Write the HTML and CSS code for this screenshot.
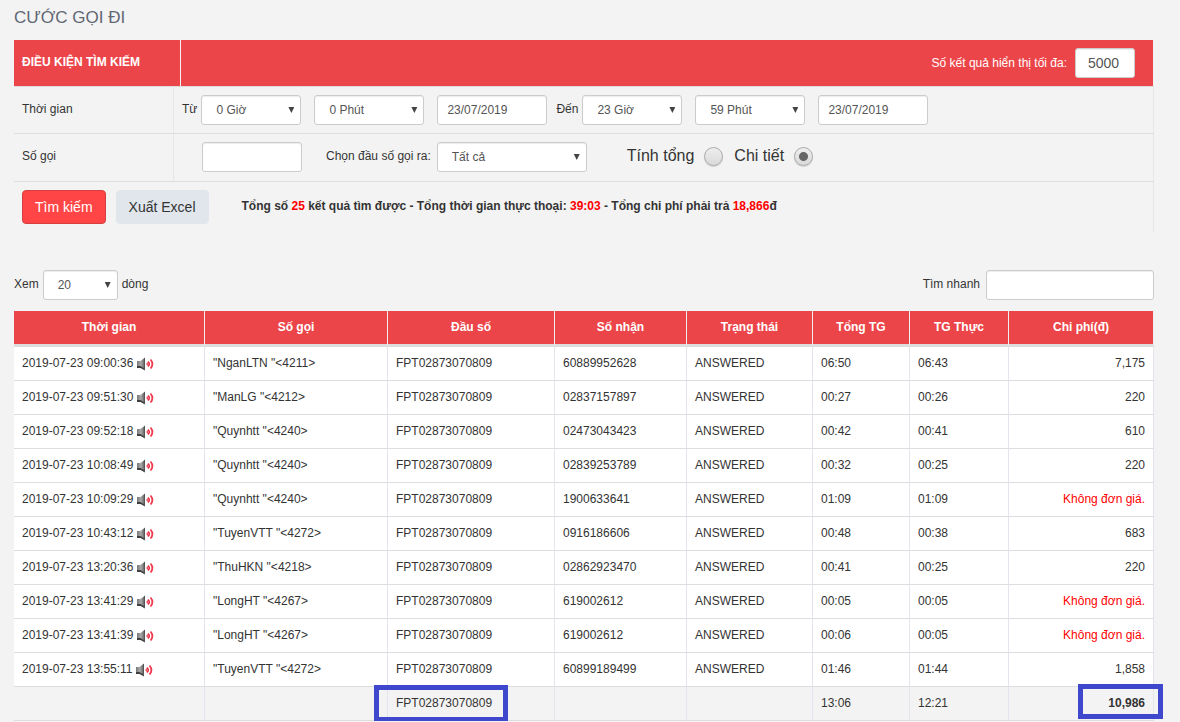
FILE: index.html
```html
<!DOCTYPE html>
<html lang="vi">
<head>
<meta charset="utf-8">
<meta name="viewport" content="width=device-width, initial-scale=1">
<title>Cước gọi đi</title>
<link rel="stylesheet" href="styles.css">
</head>
<body>
<svg class="sprite" aria-hidden="true">
  <defs>
    <linearGradient id="metal" x1="0" y1="0" x2="1" y2="0">
      <stop offset="0" stop-color="#777"/><stop offset="0.5" stop-color="#aaa"/><stop offset="1" stop-color="#555"/>
    </linearGradient>
    <symbol id="sound" viewBox="0 0 17 14">
      <path d="M0 4h3.500L8 0.500v12.500L3.500 10H0z" fill="url(#metal)"/>
      <path d="M0 9h3.500L8 12v1.500L3.500 11H0z" fill="#3f3f3f"/>
      <path d="M7.500 1v12" stroke="#555"/>
      <path d="M9 7l2-2v4z" fill="#f0505f"/>
      <path d="M11 4.500q2.600 2.500 0 5" fill="none" stroke="#e8283c" stroke-width="1.600"/>
      <path d="M13.500 2.500q3.800 4.500 0 9" fill="none" stroke="#ee3c4e" stroke-width="1.800"/>
    </symbol>
  </defs>
</svg>
<main class="page">
  <h1 class="title">CƯỚC GỌI ĐI</h1>
  <form class="filter">
    <div class="filter-head">
      <h2 class="filter-name">ĐIỀU KIỆN TÌM KIẾM</h2>
      <div class="filter-max">
        <label for="max">Số kết quả hiển thị tối đa:</label>
        <input class="field field-max" id="max" type="text" value="5000">
      </div>
    </div>
    <div class="filter-row">
      <div class="filter-label">Thời gian</div>
      <div class="filter-body">
        <label class="lead" for="h1">Từ</label>
        <span class="pick w-s"><select class="field" id="h1"><option>0 Giờ</option></select></span>
        <span class="pick w-m"><select class="field" aria-label="Phút bắt đầu"><option>0 Phút</option></select></span>
        <input class="field w-m" type="text" value="23/07/2019" aria-label="Ngày bắt đầu">
        <label class="lead lead-to" for="h2">Đến</label>
        <span class="pick w-s"><select class="field" id="h2"><option>23 Giờ</option></select></span>
        <span class="pick w-m"><select class="field" aria-label="Phút kết thúc"><option>59 Phút</option></select></span>
        <input class="field w-m" type="text" value="23/07/2019" aria-label="Ngày kết thúc">
      </div>
    </div>
    <div class="filter-row">
      <label class="filter-label" for="caller">Số gọi</label>
      <div class="filter-body filter-body-call">
        <input class="field w-s" id="caller" type="text">
        <label class="prefix-label" for="prefix">Chọn đầu số gọi ra:</label>
        <span class="pick w-l"><select class="field" id="prefix"><option>Tất cả</option></select></span>
        <div class="modes">
          <label class="mode">Tính tổng <input class="radio" type="radio" name="mode"></label>
          <label class="mode">Chi tiết <input class="radio" type="radio" name="mode" checked></label>
        </div>
      </div>
    </div>
    <div class="filter-foot">
      <button class="btn btn-main" type="button">Tìm kiếm</button>
      <button class="btn btn-plain" type="button">Xuất Excel</button>
      <p class="summary">Tổng số <span class="red">25</span> kết quả tìm được - Tổng thời gian thực thoại: <span class="red">39:03</span> - Tổng chi phí phải trả <span class="red">18,866</span>đ</p>
    </div>
  </form>

  <div class="tools">
    <div class="tool"><label for="rows">Xem</label> <span class="pick w-xs"><select class="field" id="rows"><option>20</option></select></span> <span class="tool-text">dòng</span></div>
    <div class="tool tool-find"><label for="find">Tìm nhanh</label> <input class="field w-find" id="find" type="text"></div>
  </div>

  <table class="calls">
    <colgroup><col class="c1"><col class="c2"><col class="c3"><col class="c4"><col class="c5"><col class="c6"><col class="c7"><col class="c8"></colgroup>
    <thead>
      <tr><th>Thời gian</th><th>Số gọi</th><th>Đầu số</th><th>Số nhận</th><th>Trạng thái</th><th>Tổng TG</th><th>TG Thực</th><th>Chi phí(đ)</th></tr>
    </thead>
    <tbody>
      <tr><td>2019-07-23 09:00:36 <svg class="sound"><use href="#sound"/></svg></td><td>"NganLTN "&lt;4211&gt;</td><td>FPT02873070809</td><td>60889952628</td><td>ANSWERED</td><td>06:50</td><td>06:43</td><td class="cost">7,175</td></tr>
      <tr><td>2019-07-23 09:51:30 <svg class="sound"><use href="#sound"/></svg></td><td>"ManLG "&lt;4212&gt;</td><td>FPT02873070809</td><td>02837157897</td><td>ANSWERED</td><td>00:27</td><td>00:26</td><td class="cost">220</td></tr>
      <tr><td>2019-07-23 09:52:18 <svg class="sound"><use href="#sound"/></svg></td><td>"Quynhtt "&lt;4240&gt;</td><td>FPT02873070809</td><td>02473043423</td><td>ANSWERED</td><td>00:42</td><td>00:41</td><td class="cost">610</td></tr>
      <tr><td>2019-07-23 10:08:49 <svg class="sound"><use href="#sound"/></svg></td><td>"Quynhtt "&lt;4240&gt;</td><td>FPT02873070809</td><td>02839253789</td><td>ANSWERED</td><td>00:32</td><td>00:25</td><td class="cost">220</td></tr>
      <tr><td>2019-07-23 10:09:29 <svg class="sound"><use href="#sound"/></svg></td><td>"Quynhtt "&lt;4240&gt;</td><td>FPT02873070809</td><td>1900633641</td><td>ANSWERED</td><td>01:09</td><td>01:09</td><td class="cost red">Không đơn giá.</td></tr>
      <tr><td>2019-07-23 10:43:12 <svg class="sound"><use href="#sound"/></svg></td><td>"TuyenVTT "&lt;4272&gt;</td><td>FPT02873070809</td><td>0916186606</td><td>ANSWERED</td><td>00:48</td><td>00:38</td><td class="cost">683</td></tr>
      <tr><td>2019-07-23 13:20:36 <svg class="sound"><use href="#sound"/></svg></td><td>"ThuHKN "&lt;4218&gt;</td><td>FPT02873070809</td><td>02862923470</td><td>ANSWERED</td><td>00:41</td><td>00:25</td><td class="cost">220</td></tr>
      <tr><td>2019-07-23 13:41:29 <svg class="sound"><use href="#sound"/></svg></td><td>"LongHT "&lt;4267&gt;</td><td>FPT02873070809</td><td>619002612</td><td>ANSWERED</td><td>00:05</td><td>00:05</td><td class="cost red">Không đơn giá.</td></tr>
      <tr><td>2019-07-23 13:41:39 <svg class="sound"><use href="#sound"/></svg></td><td>"LongHT "&lt;4267&gt;</td><td>FPT02873070809</td><td>619002612</td><td>ANSWERED</td><td>00:06</td><td>00:05</td><td class="cost red">Không đơn giá.</td></tr>
      <tr><td>2019-07-23 13:55:11 <svg class="sound"><use href="#sound"/></svg></td><td>"TuyenVTT "&lt;4272&gt;</td><td>FPT02873070809</td><td>60899189499</td><td>ANSWERED</td><td>01:46</td><td>01:44</td><td class="cost">1,858</td></tr>
    </tbody>
    <tfoot>
      <tr><td></td><td></td><td class="marked mark-prefix">FPT02873070809</td><td></td><td></td><td>13:06</td><td>12:21</td><td class="cost total marked mark-total">10,986</td></tr>
    </tfoot>
  </table>
</main>
</body>
</html>
```

FILE: styles.css
```css
*, *::before, *::after { box-sizing: border-box; }

body {
  margin: 0;
  background: #f3f3f3;
  color: #333;
  font: 12px/18px "Liberation Sans", Arial, sans-serif;
}

.sprite { position: absolute; width: 0; height: 0; }

.page { padding: 8px 26px 0 14px; }

.title {
  margin: 0 0 12px;
  font-size: 17px;
  font-weight: 400;
  line-height: 20px;
  color: #5f6773;
}

.red { color: #f00; }

/* Form fields */
.field {
  height: 30px;
  padding: 0 9px;
  border: 1px solid #ccc;
  border-radius: 3px;
  background: #fff;
  box-shadow: inset 0 1px 1px rgba(0, 0, 0, 0.075);
  color: #555;
  font: inherit;
}

.pick { display: inline-grid; align-items: center; }
.pick .field {
  grid-area: 1 / 1;
  width: 100%;
  padding: 0 20px 0 14px;
  appearance: none;
}
.pick::after {
  content: "";
  grid-area: 1 / 1;
  justify-self: end;
  width: 6px;
  height: 6px;
  margin-right: 7px;
  background: #444;
  clip-path: polygon(0 0, 100% 0, 50% 100%);
  pointer-events: none;
}

.w-xs { width: 75px; }
.w-s { width: 100px; }
.w-m { width: 110px; }
.w-l { width: 150px; }
.w-find { width: 168px; }

/* Search conditions */
.filter-head {
  display: flex;
  min-height: 46px;
  background: #ec4549;
  border-right: 1px solid #f3f3f3;
  color: #fff;
}
.filter-name {
  width: 167px;
  margin: 0;
  padding: 13px 8px;
  border-right: 1px solid #f3f3f3;
  font-size: 12px;
  font-weight: 700;
}
.filter-max {
  display: flex;
  flex: 1;
  align-items: center;
  justify-content: flex-end;
  gap: 8px;
  padding-right: 18px;
}
.field-max { width: 60px; padding: 0 12px; font-size: 14px; }

.filter-row {
  display: flex;
  border-top: 1px solid #ddd;
  border-right: 1px solid #e7e7e7;
}
.filter-label {
  width: 160px;
  padding: 13px 8px;
  border-right: 1px solid #e7e7e7;
}
.filter-body {
  display: flex;
  flex: 1;
  flex-wrap: wrap;
  align-items: center;
  gap: 13px;
  padding: 8px;
}
.lead { margin-right: -9px; padding-bottom: 2px; }
.lead-to { margin-left: -4px; }
.filter-body-call { gap: 0; padding: 8px 8px 9px 28px; }
.prefix-label { margin: 0 6px 0 24px; padding-bottom: 2px; }
.modes { display: flex; gap: 11px; margin-left: 40px; padding-bottom: 2px; }
.mode {
  display: flex;
  align-items: center;
  gap: 10px;
  font-size: 16px;
}
.radio {
  width: 19px;
  height: 19px;
  margin: 0;
  border: 1px solid #aaa;
  border-radius: 50%;
  background: linear-gradient(#eee, #d9d9d9);
  box-shadow: 0 1px 1px rgba(0, 0, 0, 0.15);
  appearance: none;
}
.radio:checked {
  background: radial-gradient(circle, #666 4px, transparent 5px), linear-gradient(#eee, #d9d9d9);
}

.filter-foot {
  display: flex;
  align-items: flex-start;
  gap: 10px;
  min-height: 51px;
  padding: 8px;
  border-top: 1px solid #ddd;
  border-right: 1px solid #e7e7e7;
}
.btn {
  height: 34px;
  padding: 0 12px;
  border: 1px solid;
  border-radius: 4px;
  font: inherit;
  font-size: 14px;
}
.btn-main { background: #ff4545; border-color: #d43f3f; color: #fff; }
.btn-plain { background: #e1e6ed; border-color: #e1e6ed; color: #333; }
.summary { margin: 7px 0 0 23px; font-weight: 700; }

/* Table tools */
.tools {
  display: flex;
  justify-content: space-between;
  margin: 38px 0 11px;
}
.tool { display: flex; align-items: center; gap: 4px; }
.tool label, .tool-text { padding-bottom: 2px; }
.tool-find { gap: 6px; }

/* Calls */
.calls {
  width: 100%;
  table-layout: fixed;
  border-collapse: separate;
  border-spacing: 0;
}
.c1 { width: 191px; }
.c2 { width: 183px; }
.c3 { width: 167px; }
.c4 { width: 132px; }
.c5 { width: 126px; }
.c6 { width: 97px; }
.c7 { width: 99px; }
.c8 { width: 145px; }

.calls th {
  height: 36px;
  padding: 0 8px 2px;
  background: #ec4549;
  border-right: 1px solid #eee;
  border-bottom: 3px solid #ddd;
  color: #fff;
  font-weight: 700;
}
.calls td {
  height: 34px;
  padding: 0 8px 2px;
  background: #fff;
  border-right: 1px solid #e4e4ec;
  border-bottom: 1px solid #ddd;
  white-space: nowrap;
}
.calls tfoot td { background: #f3f3f3; }
.calls .cost { text-align: right; }
.total { font-weight: 700; }
.sound { width: 17px; height: 14px; vertical-align: -4px; }

/* Highlight frames drawn over the totals */
.marked { position: relative; }
.marked::after {
  content: "";
  position: absolute;
  border: 5px solid #3f48cc;
}
.mark-prefix::after { left: -14px; top: -2px; width: 134px; height: 37px; }
.mark-total::after { right: -10px; top: -3px; width: 85px; height: 35px; }
```
